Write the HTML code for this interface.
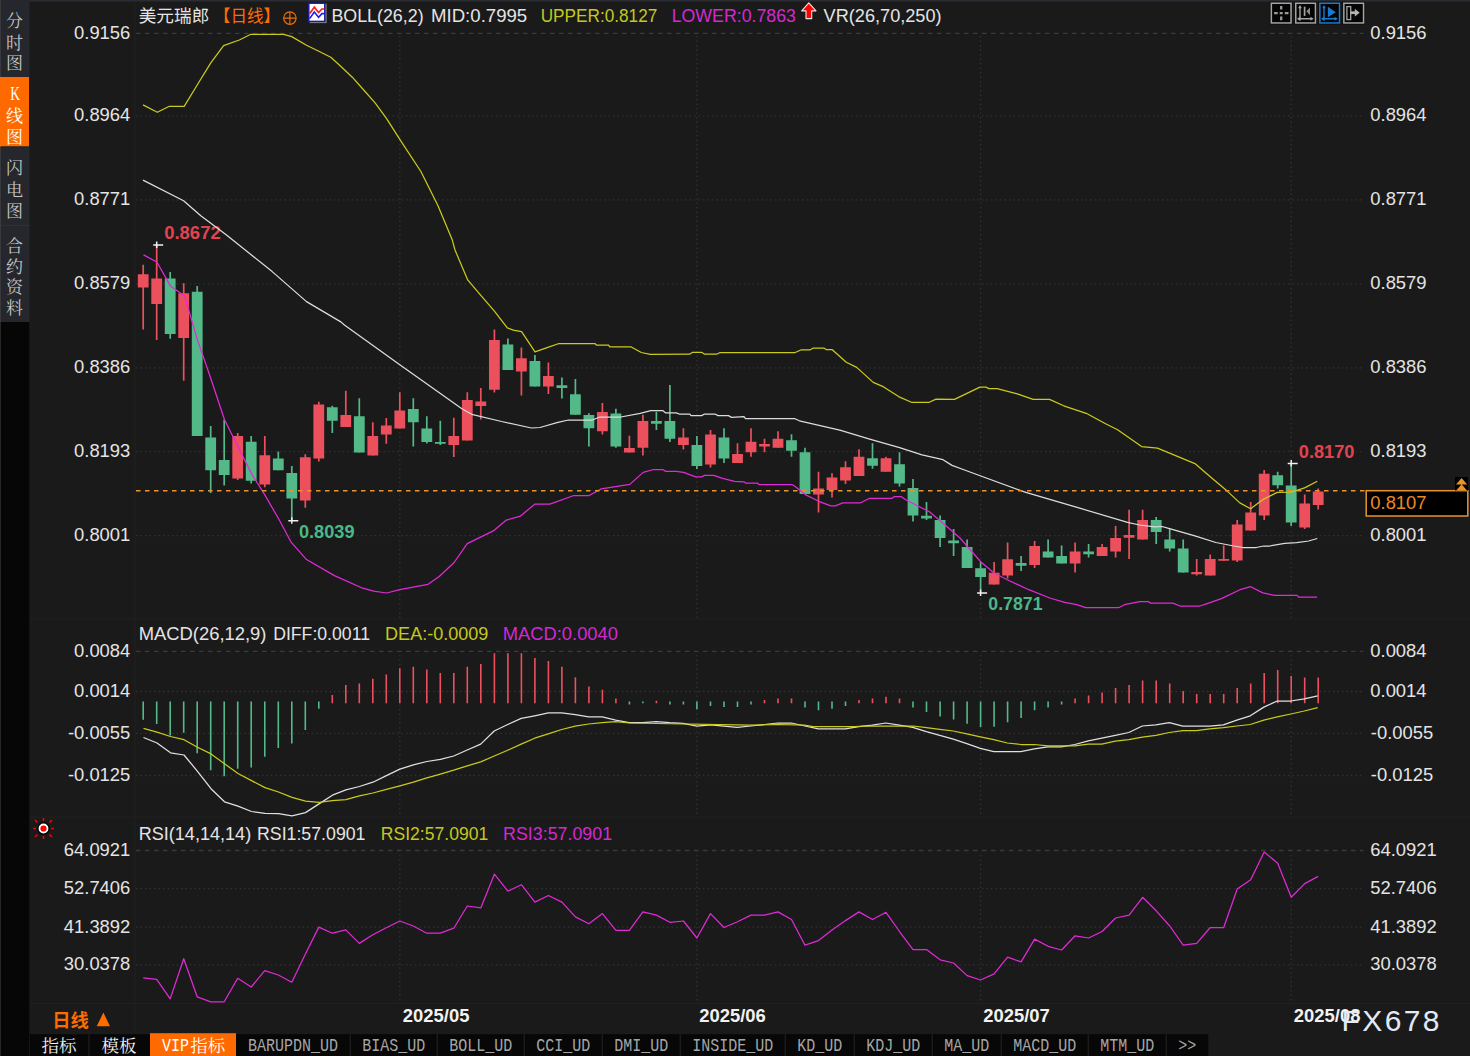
<!DOCTYPE html>
<html><head><meta charset="utf-8"><title>USDCHF</title>
<style>html,body{margin:0;padding:0;background:#1a1a1a;overflow:hidden}body{width:1470px;height:1056px;position:relative;font-family:"Liberation Sans",sans-serif}</style></head>
<body>
<svg width="1470" height="1056" viewBox="0 0 1470 1056" style="position:absolute;left:0;top:0;font-family:'Liberation Sans',sans-serif">
<rect width="1470" height="1056" fill="#1a1a1a"/>
<rect x="0" y="0" width="1470" height="1.5" fill="#2a2c31"/>
<rect x="29.5" y="618.3" width="1440.5" height="1.2" fill="#202020"/>
<rect x="29.5" y="816.3" width="1440.5" height="1.2" fill="#202020"/>
<rect x="29.5" y="1003" width="1440.5" height="1.2" fill="#202020"/>
<rect x="134.5" y="1.5" width="1" height="1031" fill="#212121"/>
<rect x="0" y="0" width="29.5" height="322" fill="#25272c"/>
<rect x="0" y="0" width="1" height="322" fill="#38393d"/>
<rect x="0" y="322" width="29.2" height="734" fill="#060606"/>
<rect x="0" y="322" width="1" height="734" fill="#282828"/>
<rect x="0" y="77" width="29" height="69.5" fill="#ff6a00"/>
<rect x="1" y="225" width="28.5" height="1" fill="#2e3036"/>
<rect x="1" y="146.5" width="28.5" height="1" fill="#1f2024"/>
<path d="M136 33.4H1363.3" stroke="#3b3b3b" stroke-width="1.3" stroke-dasharray="4.5 4.5" fill="none"/>
<path d="M136 115.9H1363.3M136 199.9H1363.3M136 283.8H1363.3M136 367.8H1363.3M136 451.7H1363.3M136 535.6H1363.3" stroke="#313131" stroke-width="1.3" stroke-dasharray="1.5 3" fill="none"/>
<path d="M399.8 36V619M399.8 655V814M399.8 855V1000.5M696.9 36V619M696.9 655V814M696.9 855V1000.5M980.6 36V619M980.6 655V814M980.6 855V1000.5M1291.2 36V619M1291.2 655V814M1291.2 855V1000.5" stroke="#313131" stroke-width="1.3" stroke-dasharray="1.5 3" fill="none"/>
<path d="M136 651.4H1363.3" stroke="#3b3b3b" stroke-width="1.3" stroke-dasharray="4.5 4.5" fill="none"/>
<path d="M136 691.5H1363.3M136 733.3H1363.3M136 775.5H1363.3" stroke="#313131" stroke-width="1.3" stroke-dasharray="1.5 3" fill="none"/>
<path d="M136 850.5H1363.3" stroke="#3b3b3b" stroke-width="1.3" stroke-dasharray="4.5 4.5" fill="none"/>
<path d="M136 888.6H1363.3M136 927.1H1363.3M136 964.8H1363.3" stroke="#313131" stroke-width="1.3" stroke-dasharray="1.5 3" fill="none"/>
<path d="M143.2 264.8V329.6M156.7 245.0V340.0M183.7 283.3V380.7M237.7 433.0V479.9M264.8 435.9V487.3M305.3 454.3V507.7M318.8 401.8V461.4M345.8 390.8V427.1M372.8 422.3V455.5M386.3 418.1V443.7M399.8 392.3V428.6M453.8 417.8V457.0M467.3 392.3V440.5M480.8 387.9V419.6M494.4 329.5V392.6M521.4 347.4V395.6M548.4 362.4V393.9M602.4 402.9V434.6M629.4 435.8V452.5M642.9 414.8V455.5M683.4 428.3V449.5M710.5 430.1V467.5M737.5 443.3V463.0M751.0 428.3V456.7M764.5 438.7V452.2M778.0 431.3V447.7M818.5 471.7V512.5M832.0 473.2V497.5M845.5 461.2V484.1M859.0 449.2V476.1M886.0 456.7V471.7M994.1 562.0V584.5M1007.6 542.6V578.5M1034.6 541.0V568.0M1075.1 542.6V572.5M1102.1 544.0V556.0M1115.6 526.0V557.5M1129.1 509.7V559.0M1142.6 509.7V539.6M1196.7 559.0V575.4M1210.2 554.5V575.4M1223.7 545.5V560.8M1237.2 520.0V562.0M1250.7 502.1V530.5M1264.2 470.0V520.0M1304.7 494.6V529.0M1318.2 488.6V509.6" stroke="#ec505d" stroke-width="1.7" fill="none"/>
<path d="M170.2 272.0V338.7M197.2 286.1V435.9M210.7 425.9V493.0M224.2 419.7V485.6M251.2 436.1V483.6M278.3 451.5V470.2M291.8 466.0V520.5M332.3 405.8V433.0M359.3 398.3V452.5M413.3 398.3V446.5M426.8 416.3V443.5M440.3 420.8V445.0M507.9 338.5V369.9M534.9 355.0V386.4M561.9 377.4V398.4M575.4 378.9V414.8M588.9 413.3V446.6M615.9 408.8V447.8M656.4 411.8V430.1M669.9 384.9V442.1M696.9 436.1V469.0M724.0 428.3V463.0M791.5 434.2V456.7M805.0 447.7V494.1M872.5 443.2V468.7M899.5 452.2V486.6M913.0 479.1V521.5M926.5 502.0V520.0M940.1 515.5V547.0M953.6 529.1V556.0M967.1 539.6V568.0M980.6 562.0V593.0M1021.1 556.0V571.0M1048.1 539.6V557.5M1061.6 545.6V563.5M1088.6 544.0V557.5M1156.2 517.0V544.0M1169.7 528.3V551.5M1183.2 539.5V572.4M1277.7 471.7V488.6M1291.2 464.0V526.0" stroke="#54b989" stroke-width="1.7" fill="none"/>
<path d="M137.8 274.2h10.8V287.6h-10.8zM151.3 278.5h10.8V304.0h-10.8zM178.3 293.3h10.8V338.1h-10.8zM232.3 436.1h10.8V478.5h-10.8zM259.4 455.2h10.8V484.4h-10.8zM299.9 457.2h10.8V500.6h-10.8zM313.4 404.6h10.8V458.6h-10.8zM340.4 415.1h10.8V427.1h-10.8zM367.4 436.0h10.8V455.5h-10.8zM380.9 425.6h10.8V434.5h-10.8zM394.4 410.6h10.8V428.6h-10.8zM448.4 436.0h10.8V445.0h-10.8zM461.9 400.1h10.8V440.5h-10.8zM475.4 401.6h10.8V406.1h-10.8zM489.0 340.0h10.8V389.7h-10.8zM516.0 358.2h10.8V371.4h-10.8zM543.0 375.9h10.8V386.4h-10.8zM597.0 412.1h10.8V431.3h-10.8zM624.0 448.1h10.8V452.5h-10.8zM637.5 421.1h10.8V447.8h-10.8zM678.0 437.6h10.8V445.1h-10.8zM705.1 434.6h10.8V464.5h-10.8zM732.1 454.0h10.8V463.0h-10.8zM745.6 441.7h10.8V452.2h-10.8zM759.1 444.0h10.8V446.4h-10.8zM772.6 438.7h10.8V447.7h-10.8zM813.1 488.6h10.8V494.6h-10.8zM826.6 477.6h10.8V490.1h-10.8zM840.1 467.2h10.8V480.6h-10.8zM853.6 456.7h10.8V476.1h-10.8zM880.6 458.2h10.8V471.7h-10.8zM988.7 572.8h10.8V584.5h-10.8zM1002.2 559.3h10.8V575.5h-10.8zM1029.2 545.9h10.8V565.0h-10.8zM1069.7 551.6h10.8V563.5h-10.8zM1096.7 547.0h10.8V556.0h-10.8zM1110.2 538.0h10.8V551.6h-10.8zM1123.7 535.0h10.8V537.8h-10.8zM1137.2 520.0h10.8V539.6h-10.8zM1191.3 572.0h10.8V574.2h-10.8zM1204.8 559.0h10.8V575.4h-10.8zM1218.3 559.0h10.8V560.8h-10.8zM1231.8 524.6h10.8V560.5h-10.8zM1245.3 512.6h10.8V530.5h-10.8zM1258.8 473.7h10.8V515.6h-10.8zM1299.3 503.6h10.8V527.5h-10.8zM1312.8 491.6h10.8V505.1h-10.8z" fill="#ec505d"/>
<path d="M164.8 278.5h10.8V333.9h-10.8zM191.8 291.8h10.8V435.9h-10.8zM205.3 437.6h10.8V470.2h-10.8zM218.8 460.0h10.8V475.0h-10.8zM245.8 441.8h10.8V480.7h-10.8zM272.9 458.6h10.8V470.2h-10.8zM286.4 473.0h10.8V498.6h-10.8zM326.9 407.3h10.8V420.8h-10.8zM353.9 416.3h10.8V452.5h-10.8zM407.9 409.1h10.8V422.3h-10.8zM421.4 428.6h10.8V442.0h-10.8zM434.9 442.0h10.8V443.7h-10.8zM502.5 344.5h10.8V369.9h-10.8zM529.5 361.0h10.8V386.4h-10.8zM556.5 385.2h10.8V387.9h-10.8zM570.0 394.2h10.8V414.8h-10.8zM583.5 415.1h10.8V428.3h-10.8zM610.5 413.6h10.8V446.6h-10.8zM651.0 421.1h10.8V423.8h-10.8zM664.5 421.1h10.8V438.8h-10.8zM691.5 445.1h10.8V466.0h-10.8zM718.6 437.6h10.8V458.5h-10.8zM786.1 440.2h10.8V450.7h-10.8zM799.6 452.2h10.8V494.1h-10.8zM867.1 458.2h10.8V465.7h-10.8zM894.1 464.2h10.8V483.6h-10.8zM907.6 488.1h10.8V515.5h-10.8zM921.1 515.8h10.8V518.5h-10.8zM934.7 520.0h10.8V538.0h-10.8zM948.2 540.6h10.8V543.3h-10.8zM961.7 547.0h10.8V568.0h-10.8zM975.2 568.3h10.8V577.0h-10.8zM1015.7 563.1h10.8V565.8h-10.8zM1042.7 551.6h10.8V557.5h-10.8zM1056.2 556.0h10.8V563.5h-10.8zM1083.2 551.6h10.8V554.3h-10.8zM1150.8 520.0h10.8V532.0h-10.8zM1164.3 539.5h10.8V548.5h-10.8zM1177.8 548.5h10.8V572.4h-10.8zM1272.3 475.2h10.8V485.2h-10.8zM1285.8 485.6h10.8V522.6h-10.8z" fill="#54b989"/>
<rect x="163.6" y="224.5" width="58" height="17.5" fill="#1a1a1a"/>
<rect x="298.2" y="522.8" width="58" height="17.5" fill="#1a1a1a"/>
<rect x="987.6" y="595" width="58" height="17.5" fill="#1a1a1a"/>
<rect x="1298.2" y="443.5" width="58" height="17.5" fill="#1a1a1a"/>
<text x="164.2" y="239.3" font-size="17.8" fill="#e2444f" text-anchor="start" font-weight="bold" textLength="56.5" lengthAdjust="spacingAndGlyphs">0.8672</text>
<text x="298.9" y="537.8" font-size="17.8" fill="#4ab888" text-anchor="start" font-weight="bold" textLength="55.6" lengthAdjust="spacingAndGlyphs">0.8039</text>
<text x="988.3" y="610.0" font-size="17.8" fill="#4ab888" text-anchor="start" font-weight="bold" textLength="54.2" lengthAdjust="spacingAndGlyphs">0.7871</text>
<text x="1298.8" y="458.3" font-size="17.8" fill="#e2444f" text-anchor="start" font-weight="bold" textLength="55.6" lengthAdjust="spacingAndGlyphs">0.8170</text>
<path d="M143.0 180.1L183.6 200.7L200.8 215.8L226.5 235.0L272.2 271.6L306.5 301.6L340.8 321.9L344.4 325.0L399.8 364.7L461.9 408.8L471.7 414.3L501.6 421.5L531.5 428.0L540.0 427.5L557.9 422.3L568.4 420.0L592.3 420.0L599.8 417.0L620.8 417.0L640.2 413.3L650.7 410.6L662.7 410.6L665.7 412.9L676.2 412.9L679.2 414.0L689.6 414.0L691.1 415.6L701.6 415.6L704.6 414.0L715.0 414.0L718.0 415.6L728.5 415.6L731.5 417.4L744.0 416.7L745.5 418.7L794.9 418.7L799.4 420.8L839.8 430.2L869.7 439.2L899.6 447.7L922.0 454.9L943.0 459.7L952.0 465.4L964.5 470.0L1025.8 492.4L1079.7 508.2L1127.6 522.4L1139.6 525.0L1154.5 526.9L1162.0 526.5L1169.5 528.6L1194.9 535.8L1215.8 542.5L1233.8 546.0L1242.8 547.5L1256.3 547.5L1263.7 546.0L1269.7 546.0L1284.7 543.3L1296.7 542.7L1308.6 541.0L1317.3 538.5" stroke="#dcdcdc" stroke-width="1.25" fill="none" stroke-linejoin="round"/>
<path d="M143.0 104.9L157.3 112.3L169.3 106.3L184.2 106.3L197.5 84.5L210.8 62.9L223.6 45.7L239.3 40.0L250.8 34.3L283.7 34.3L291.7 36.6L306.5 45.2L318.8 51.2L330.8 57.2L341.5 67.0L352.3 77.2L363.7 90.0L375.1 102.9L386.6 118.6L400.3 140.1L420.9 171.5L438.0 205.8L452.3 240.1L455.0 250.0L463.9 271.0L467.7 279.9L480.4 294.9L494.6 311.4L507.3 327.8L513.3 330.1L521.6 331.6L535.0 351.8L547.8 347.3L559.0 343.5L594.9 343.5L596.4 345.0L608.4 345.0L609.9 346.8L630.8 346.8L641.3 352.5L650.3 354.3L689.6 354.2L692.6 352.3L701.6 352.3L704.6 354.2L716.6 354.2L719.6 352.7L748.0 352.7L794.6 352.7L801.4 349.8L810.3 349.8L813.3 348.0L823.8 348.0L826.1 349.5L832.0 349.5L846.3 362.2L856.7 367.4L873.2 382.4L883.7 386.9L898.6 396.6L911.4 402.3L929.3 402.3L936.0 399.1L954.5 399.4L979.9 387.1L985.9 387.1L988.9 388.6L997.1 388.6L1017.3 393.9L1033.1 399.4L1049.5 399.4L1063.7 405.8L1086.2 413.3L1105.6 423.8L1117.6 429.8L1141.6 446.6L1157.5 448.2L1194.9 463.6L1212.9 478.9L1227.8 491.6L1239.8 502.9L1250.6 508.8L1263.7 499.1L1277.2 492.4L1291.1 492.1L1304.6 487.9L1317.3 481.2" stroke="#caca1c" stroke-width="1.25" fill="none" stroke-linejoin="round"/>
<path d="M143.5 254.9L156.9 262.0L170.5 286.1L184.7 296.1L197.5 340.1L210.3 377.0L224.5 419.7L233.0 436.7L251.5 473.6L264.8 494.9L280.0 521.2L290.9 541.8L306.1 559.2L334.4 575.6L362.7 588.2L373.6 591.2L386.7 593.0L399.7 589.7L428.0 584.3L438.9 576.7L454.1 562.5L467.2 543.6L493.3 530.9L506.4 520.1L520.5 516.1L534.7 504.2L549.9 504.2L573.9 495.5L589.1 495.5L601.3 488.9L629.8 484.4L643.2 472.4L653.7 469.5L662.7 469.5L665.7 471.4L676.2 471.4L683.6 472.4L695.6 476.9L701.6 476.9L704.6 475.4L713.6 475.4L722.6 478.4L734.5 481.4L744.0 481.8L745.5 483.0L757.4 483.0L759.0 484.5L791.9 484.5L794.9 486.3L805.3 494.6L818.8 501.3L830.8 505.8L835.3 505.8L842.8 502.8L860.7 502.8L869.7 498.3L892.1 498.3L894.4 496.5L901.1 496.5L905.6 499.8L929.5 511.8L944.5 524.5L960.0 538.0L980.9 562.0L994.4 573.3L1009.4 580.7L1028.8 589.7L1049.8 598.0L1064.7 602.4L1076.7 604.7L1085.7 607.7L1118.6 607.7L1124.6 604.7L1139.6 601.7L1148.5 601.7L1150.7 603.1L1172.9 603.1L1180.0 606.0L1200.0 606.0L1207.1 603.6L1221.4 598.6L1240.0 589.7L1250.7 586.7L1262.9 592.9L1274.3 595.4L1297.1 595.4L1298.6 597.1L1317.1 597.1" stroke="#e02ad6" stroke-width="1.25" fill="none" stroke-linejoin="round"/>
<path d="M136 490.7H1365.5" stroke="#e8932c" stroke-width="1.6" stroke-dasharray="4.5 4.5" fill="none"/>
<path d="M153.2 245H163.2M156.7 241.5V248" stroke="#f0f0f0" stroke-width="1.5" fill="none"/>
<path d="M288.3 520.8H298.3M291.8 517.3V523.8" stroke="#f0f0f0" stroke-width="1.5" fill="none"/>
<path d="M977.1 593H987.1M980.6 589.5V596" stroke="#f0f0f0" stroke-width="1.5" fill="none"/>
<path d="M1287.7 463.6H1297.7M1291.2 460.1V466.6" stroke="#f0f0f0" stroke-width="1.5" fill="none"/>
<path d="M332.3 703.2V695.1M345.8 703.2V684.9M359.3 703.2V683.6M372.8 703.2V678.8M386.3 703.2V674.4M399.8 703.2V668.3M413.3 703.2V666.8M426.8 703.2V669.6M440.3 703.2V672.9M453.8 703.2V672.9M467.3 703.2V666.8M480.8 703.2V664.0M494.4 703.2V653.3M507.9 703.2V653.3M521.4 703.2V653.3M534.9 703.2V658.1M548.4 703.2V660.9M561.9 703.2V666.8M575.4 703.2V677.2M588.9 703.2V686.4M602.4 703.2V689.7M615.9 703.2V698.4M656.4 703.2V700.8M764.5 703.2V700.1M778.0 703.2V698.4M791.5 703.2V698.4M859.0 703.2V700.1M872.5 703.2V698.4M886.0 703.2V696.8M899.5 703.2V698.4M1075.1 703.2V698.4M1088.6 703.2V695.5M1102.1 703.2V692.5M1115.6 703.2V687.9M1129.1 703.2V684.9M1142.6 703.2V680.5M1156.2 703.2V680.5M1169.7 703.2V683.6M1183.2 703.2V691.0M1196.7 703.2V694.0M1210.2 703.2V694.0M1223.7 703.2V694.0M1237.2 703.2V687.9M1250.7 703.2V683.6M1264.2 703.2V672.9M1277.7 703.2V670.1M1291.2 703.2V675.9M1304.7 703.2V677.5M1318.2 703.2V677.5" stroke="#ec505d" stroke-width="1.6" fill="none"/>
<path d="M143.2 701.6V719.7M156.7 701.6V724.0M170.2 701.6V735.4M183.7 701.6V732.8M197.2 701.6V753.2M210.7 701.6V770.2M224.2 701.6V776.3M237.7 701.6V768.7M251.2 701.6V767.6M264.8 701.6V756.7M278.3 701.6V748.0M291.8 701.6V743.6M305.3 701.6V729.9M318.8 701.6V708.8M629.4 701.6V704.5M642.9 701.6V703.2M669.9 701.6V704.5M683.4 701.6V704.5M696.9 701.6V709.2M710.5 701.6V705.9M724.0 701.6V707.0M737.5 701.6V707.0M751.0 701.6V704.5M805.0 701.6V707.5M818.5 701.6V710.3M832.0 701.6V708.8M845.5 701.6V706.0M913.0 701.6V707.5M926.5 701.6V711.9M940.1 701.6V716.4M953.6 701.6V719.5M967.1 701.6V723.8M980.6 701.6V727.1M994.1 701.6V726.7M1007.6 701.6V722.3M1021.1 701.6V718.0M1034.6 701.6V710.3M1048.1 701.6V707.5M1061.6 701.6V704.5" stroke="#54b989" stroke-width="1.6" fill="none"/>
<path d="M143.5 737.5L157.0 743.0L170.5 752.8L184.0 755.0L197.5 771.3L211.0 788.7L224.5 801.8L238.0 806.1L251.5 811.5L265.0 813.3L278.5 813.7L292.0 815.9L305.5 812.6L319.0 803.9L332.4 795.2L345.9 789.8L359.4 786.5L372.9 782.2L386.4 775.6L399.9 769.1L413.4 764.8L426.9 761.5L440.4 759.3L453.7 756.0L467.2 750.0L480.7 744.1L494.2 731.0L507.7 724.5L521.2 718.4L534.7 715.8L548.2 712.9L561.7 712.9L575.2 714.7L588.7 716.9L602.2 716.9L615.7 720.1L629.2 722.7L642.7 722.7L656.2 721.7L669.6 722.7L683.1 723.4L696.9 726.2L710.4 724.9L723.9 726.2L737.3 727.3L750.8 726.0L764.4 724.5L777.9 723.0L791.4 723.0L804.9 726.0L818.4 728.8L831.8 728.8L845.3 728.8L858.8 726.7L872.3 725.1L885.8 723.0L899.3 725.1L912.8 727.3L926.3 731.7L939.8 735.4L953.3 739.1L966.8 743.6L980.3 748.4L993.8 751.7L1007.3 751.7L1020.8 751.7L1034.3 748.9L1047.8 746.9L1061.3 746.9L1074.8 744.5L1088.3 740.8L1101.8 738.2L1115.3 735.4L1128.8 732.5L1142.3 726.0L1155.8 724.9L1169.3 722.7L1182.8 726.2L1196.3 726.2L1209.8 726.2L1223.3 724.9L1236.8 720.1L1250.3 715.8L1263.8 707.1L1277.3 701.0L1290.8 701.0L1304.3 698.8L1317.7 695.8" stroke="#e0e0e0" stroke-width="1.25" fill="none" stroke-linejoin="round"/>
<path d="M143.5 728.4L157.0 732.1L170.5 736.5L184.0 739.7L197.5 747.3L211.0 753.9L224.5 763.7L238.0 773.5L251.5 780.6L265.0 787.6L278.5 792.0L292.0 797.4L305.5 801.1L319.0 802.4L332.4 800.7L345.9 799.6L359.4 795.9L372.9 793.0L386.4 789.3L399.9 785.9L413.4 782.2L426.9 777.8L440.4 774.1L453.7 770.2L467.2 765.8L480.7 761.9L494.2 756.0L507.7 750.2L521.2 744.1L534.7 738.2L548.2 733.8L561.7 729.5L575.2 726.2L588.7 724.0L602.2 722.7L615.7 721.7L629.2 723.0L750.0 725.1L777.9 724.5L804.4 725.1L813.1 726.7L854.5 726.7L865.4 726.0L913.3 726.0L926.3 727.7L939.8 729.3L953.3 731.0L966.8 733.8L980.3 736.9L993.8 739.7L1007.3 743.0L1020.8 744.5L1034.3 744.5L1047.8 745.8L1074.8 745.8L1088.3 744.1L1101.8 744.1L1115.3 741.2L1128.8 739.7L1142.3 737.1L1155.8 735.4L1169.3 732.5L1182.8 730.6L1196.3 730.6L1209.8 728.8L1223.3 727.7L1236.8 726.0L1250.3 724.5L1263.8 720.1L1277.3 716.9L1290.8 714.0L1304.3 711.0L1317.7 707.7" stroke="#caca1c" stroke-width="1.25" fill="none" stroke-linejoin="round"/>
<path d="M143.2 977.8L156.7 979.3L170.2 998.9L183.7 958.7L197.2 996.8L210.7 1001.8L224.2 1001.8L237.7 978.3L251.2 987.0L264.8 970.6L278.3 975.0L291.8 982.2L305.3 954.3L318.8 927.1L332.3 933.2L345.8 929.9L359.3 943.4L372.8 934.7L386.3 927.8L399.8 921.0L413.3 926.0L426.8 933.2L440.3 933.2L453.8 928.2L467.3 906.0L480.8 907.9L494.4 874.2L507.9 891.2L521.4 884.7L534.9 902.1L548.4 895.5L561.9 902.1L575.4 916.9L588.9 923.8L602.4 913.6L615.9 930.4L629.4 930.4L642.9 911.9L656.4 915.1L669.9 922.3L683.4 921.0L696.9 938.0L710.5 913.6L724.0 927.5L737.5 921.7L751.0 915.1L764.5 915.1L778.0 911.9L791.5 919.5L805.0 945.2L818.5 940.6L832.0 929.9L845.5 920.6L859.0 911.9L872.5 919.5L886.0 912.3L899.5 931.5L913.0 949.5L926.5 949.5L940.1 959.8L953.6 963.0L967.1 975.6L980.6 980.0L994.1 973.9L1007.6 957.1L1021.1 961.9L1034.6 939.1L1048.1 946.3L1061.6 950.0L1075.1 935.8L1088.6 938.0L1102.1 931.5L1115.6 918.0L1129.1 915.1L1142.6 897.3L1156.2 910.8L1169.7 926.0L1183.2 945.2L1196.7 943.4L1210.2 927.5L1223.7 927.5L1237.2 889.0L1250.7 879.7L1264.2 852.0L1277.7 863.3L1291.2 897.3L1304.7 883.6L1318.2 876.4" stroke="#e02ad6" stroke-width="1.25" fill="none" stroke-linejoin="round"/>
<text x="130.3" y="38.6" font-size="18.4" fill="#e4e4e4" text-anchor="end" font-weight="normal" >0.9156</text>
<text x="1370.3" y="38.6" font-size="18.4" fill="#e4e4e4" text-anchor="start" font-weight="normal" >0.9156</text>
<text x="130.3" y="121.1" font-size="18.4" fill="#e4e4e4" text-anchor="end" font-weight="normal" >0.8964</text>
<text x="1370.3" y="121.1" font-size="18.4" fill="#e4e4e4" text-anchor="start" font-weight="normal" >0.8964</text>
<text x="130.3" y="205.1" font-size="18.4" fill="#e4e4e4" text-anchor="end" font-weight="normal" >0.8771</text>
<text x="1370.3" y="205.1" font-size="18.4" fill="#e4e4e4" text-anchor="start" font-weight="normal" >0.8771</text>
<text x="130.3" y="289.0" font-size="18.4" fill="#e4e4e4" text-anchor="end" font-weight="normal" >0.8579</text>
<text x="1370.3" y="289.0" font-size="18.4" fill="#e4e4e4" text-anchor="start" font-weight="normal" >0.8579</text>
<text x="130.3" y="372.9" font-size="18.4" fill="#e4e4e4" text-anchor="end" font-weight="normal" >0.8386</text>
<text x="1370.3" y="372.9" font-size="18.4" fill="#e4e4e4" text-anchor="start" font-weight="normal" >0.8386</text>
<text x="130.3" y="456.9" font-size="18.4" fill="#e4e4e4" text-anchor="end" font-weight="normal" >0.8193</text>
<text x="1370.3" y="456.9" font-size="18.4" fill="#e4e4e4" text-anchor="start" font-weight="normal" >0.8193</text>
<text x="130.3" y="540.9" font-size="18.4" fill="#e4e4e4" text-anchor="end" font-weight="normal" >0.8001</text>
<text x="1370.3" y="540.9" font-size="18.4" fill="#e4e4e4" text-anchor="start" font-weight="normal" >0.8001</text>
<text x="130.3" y="656.9" font-size="18.4" fill="#e4e4e4" text-anchor="end" font-weight="normal" >0.0084</text>
<text x="1370.3" y="656.9" font-size="18.4" fill="#e4e4e4" text-anchor="start" font-weight="normal" >0.0084</text>
<text x="130.3" y="697.0" font-size="18.4" fill="#e4e4e4" text-anchor="end" font-weight="normal" >0.0014</text>
<text x="1370.3" y="697.0" font-size="18.4" fill="#e4e4e4" text-anchor="start" font-weight="normal" >0.0014</text>
<text x="130.3" y="738.8" font-size="18.4" fill="#e4e4e4" text-anchor="end" font-weight="normal" >-0.0055</text>
<text x="1370.8" y="738.8" font-size="18.4" fill="#e4e4e4" text-anchor="start" font-weight="normal" >-0.0055</text>
<text x="130.3" y="781.0" font-size="18.4" fill="#e4e4e4" text-anchor="end" font-weight="normal" >-0.0125</text>
<text x="1370.8" y="781.0" font-size="18.4" fill="#e4e4e4" text-anchor="start" font-weight="normal" >-0.0125</text>
<text x="130.3" y="856.0" font-size="18.4" fill="#e4e4e4" text-anchor="end" font-weight="normal" >64.0921</text>
<text x="1370.3" y="856.0" font-size="18.4" fill="#e4e4e4" text-anchor="start" font-weight="normal" >64.0921</text>
<text x="130.3" y="894.1" font-size="18.4" fill="#e4e4e4" text-anchor="end" font-weight="normal" >52.7406</text>
<text x="1370.3" y="894.1" font-size="18.4" fill="#e4e4e4" text-anchor="start" font-weight="normal" >52.7406</text>
<text x="130.3" y="932.6" font-size="18.4" fill="#e4e4e4" text-anchor="end" font-weight="normal" >41.3892</text>
<text x="1370.3" y="932.6" font-size="18.4" fill="#e4e4e4" text-anchor="start" font-weight="normal" >41.3892</text>
<text x="130.3" y="970.3" font-size="18.4" fill="#e4e4e4" text-anchor="end" font-weight="normal" >30.0378</text>
<text x="1370.3" y="970.3" font-size="18.4" fill="#e4e4e4" text-anchor="start" font-weight="normal" >30.0378</text>
<rect x="1366.2" y="490.7" width="101.6" height="25.3" fill="#000" stroke="#e8932c" stroke-width="1.5"/>
<text x="1370.3" y="508.9" font-size="18.4" fill="#ec8a22" text-anchor="start" font-weight="normal" >0.8107</text>
<rect x="1455" y="477" width="13" height="13.5" fill="#000"/>
<path d="M1456 484.5L1461.6 478L1467.2 484.5zM1456 490.7L1461.6 484.2L1467.2 490.7z" fill="#e8932c"/>
<text x="402.8" y="1022.4" font-size="18.4" fill="#f2f2f2" text-anchor="start" font-weight="bold" textLength="66.6" lengthAdjust="spacingAndGlyphs">2025/05</text>
<text x="699.2" y="1022.4" font-size="18.4" fill="#f2f2f2" text-anchor="start" font-weight="bold" textLength="66.6" lengthAdjust="spacingAndGlyphs">2025/06</text>
<text x="983.2" y="1022.4" font-size="18.4" fill="#f2f2f2" text-anchor="start" font-weight="bold" textLength="66.6" lengthAdjust="spacingAndGlyphs">2025/07</text>
<text x="1293.8" y="1022.4" font-size="18.4" fill="#f2f2f2" text-anchor="start" font-weight="bold" textLength="66.6" lengthAdjust="spacingAndGlyphs">2025/08</text>
<text x="331.4" y="21.7" font-size="18.8" fill="#e4e4e4" text-anchor="start" font-weight="normal" textLength="92.2" lengthAdjust="spacingAndGlyphs">BOLL(26,2)</text>
<text x="431" y="21.7" font-size="18.8" fill="#e4e4e4" text-anchor="start" font-weight="normal" textLength="96.2" lengthAdjust="spacingAndGlyphs">MID:0.7995</text>
<text x="540.7" y="21.7" font-size="18.8" fill="#c4c81e" text-anchor="start" font-weight="normal" textLength="116.6" lengthAdjust="spacingAndGlyphs">UPPER:0.8127</text>
<text x="671.7" y="21.7" font-size="18.8" fill="#d428d4" text-anchor="start" font-weight="normal" textLength="124.3" lengthAdjust="spacingAndGlyphs">LOWER:0.7863</text>
<text x="823.6" y="21.7" font-size="18.8" fill="#e4e4e4" text-anchor="start" font-weight="normal" textLength="118" lengthAdjust="spacingAndGlyphs">VR(26,70,250)</text>
<text x="138.7" y="640.0" font-size="18.8" fill="#e4e4e4" text-anchor="start" font-weight="normal" textLength="127.8" lengthAdjust="spacingAndGlyphs">MACD(26,12,9)</text>
<text x="273.2" y="640.0" font-size="18.8" fill="#e4e4e4" text-anchor="start" font-weight="normal" textLength="96.8" lengthAdjust="spacingAndGlyphs">DIFF:0.0011</text>
<text x="385.1" y="640.0" font-size="18.8" fill="#c4c81e" text-anchor="start" font-weight="normal" textLength="103.2" lengthAdjust="spacingAndGlyphs">DEA:-0.0009</text>
<text x="502.7" y="640.0" font-size="18.8" fill="#d428d4" text-anchor="start" font-weight="normal" textLength="115.3" lengthAdjust="spacingAndGlyphs">MACD:0.0040</text>
<text x="138.7" y="839.6" font-size="18.8" fill="#e4e4e4" text-anchor="start" font-weight="normal" textLength="112.5" lengthAdjust="spacingAndGlyphs">RSI(14,14,14)</text>
<text x="257" y="839.6" font-size="18.8" fill="#e4e4e4" text-anchor="start" font-weight="normal" textLength="108.5" lengthAdjust="spacingAndGlyphs">RSI1:57.0901</text>
<text x="380.8" y="839.6" font-size="18.8" fill="#c4c81e" text-anchor="start" font-weight="normal" textLength="107.5" lengthAdjust="spacingAndGlyphs">RSI2:57.0901</text>
<text x="503.1" y="839.6" font-size="18.8" fill="#d428d4" text-anchor="start" font-weight="normal" textLength="109" lengthAdjust="spacingAndGlyphs">RSI3:57.0901</text>
<text x="138.7" y="22.2" font-family="'Liberation Sans','Noto Sans CJK SC',sans-serif" font-size="17.6" fill="#e4e4e4" textLength="70.6" lengthAdjust="spacingAndGlyphs">美元瑞郎</text>
<text x="213.8" y="22" font-family="'Liberation Sans','Noto Sans CJK SC',sans-serif" font-size="16.6" fill="#ff6c00">【日线】</text>
<text font-family="'Liberation Serif','Noto Serif CJK SC',serif" font-size="17" fill="#c6c6c6" text-anchor="middle"><tspan x="14.6" y="27.3">分</tspan><tspan x="14.6" y="48.7">时</tspan><tspan x="14.6" y="69.2">图</tspan></text>
<text font-family="'Liberation Serif','Noto Serif CJK SC',serif" font-size="17" fill="#ffffff" text-anchor="middle"><tspan x="14.6" y="122.3">线</tspan><tspan x="14.6" y="143.1">图</tspan></text>
<text font-family="'Liberation Serif','Noto Serif CJK SC',serif" font-size="17" fill="#c6c6c6" text-anchor="middle"><tspan x="14.6" y="174.3">闪</tspan><tspan x="14.6" y="195.8">电</tspan><tspan x="14.6" y="216.6">图</tspan></text>
<text font-family="'Liberation Serif','Noto Serif CJK SC',serif" font-size="17" fill="#c6c6c6" text-anchor="middle"><tspan x="14.6" y="251.7">合</tspan><tspan x="14.6" y="272.8">约</tspan><tspan x="14.6" y="293.2">资</tspan><tspan x="14.6" y="314.2">料</tspan></text>
<text x="10.2" y="100" font-family="'Liberation Serif',serif" font-size="18.5" fill="#fff" textLength="9.8" lengthAdjust="spacingAndGlyphs">K</text>
<text x="52.3" y="1027" font-family="'Liberation Sans','Noto Sans CJK SC',sans-serif" font-size="18.3" font-weight="bold" fill="#ff6c00">日线</text>
<path d="M96.7 1026.2L103.4 1012.6L110 1026.2z" fill="#ff6c00"/>
<rect x="30" y="1034.2" width="1178.3" height="21.799999999999955" fill="#070707"/>
<rect x="150" y="1033.2" width="86" height="22.8" fill="#ff6a00"/>
<path d="M89 1033.7V1056M350.3 1033.7V1056M437.3 1033.7V1056M524.3 1033.7V1056M602.3 1033.7V1056M680.3 1033.7V1056M785.3 1033.7V1056M854.3 1033.7V1056M932.3 1033.7V1056M1001.3 1033.7V1056M1088.3 1033.7V1056M1166.3 1033.7V1056" stroke="#1b1b1b" stroke-width="1.5" fill="none"/>
<text x="41.5" y="1051.5" font-family="'Liberation Serif','Noto Serif CJK SC',serif" font-size="17.5" fill="#f2f2f2">指标</text>
<text x="101.5" y="1051.5" font-family="'Liberation Serif','Noto Serif CJK SC',serif" font-size="17.5" fill="#f2f2f2">模板</text>
<text x="190.2" y="1051.5" font-family="'Liberation Serif','Noto Serif CJK SC',serif" font-size="17.5" fill="#fff">指标</text>
<text transform="translate(162,1051) scale(1,1.17)" font-family="'Liberation Mono',monospace" font-size="15" fill="#fff" textLength="27" lengthAdjust="spacing">VIP</text>
<text transform="translate(248,1051) scale(1,1.17)" font-family="'Liberation Mono',monospace" font-size="15" fill="#a6a6a6" textLength="90" lengthAdjust="spacing">BARUPDN_UD</text>
<text transform="translate(362.3,1051) scale(1,1.17)" font-family="'Liberation Mono',monospace" font-size="15" fill="#a6a6a6" textLength="63" lengthAdjust="spacing">BIAS_UD</text>
<text transform="translate(449.3,1051) scale(1,1.17)" font-family="'Liberation Mono',monospace" font-size="15" fill="#a6a6a6" textLength="63" lengthAdjust="spacing">BOLL_UD</text>
<text transform="translate(536.3,1051) scale(1,1.17)" font-family="'Liberation Mono',monospace" font-size="15" fill="#a6a6a6" textLength="54" lengthAdjust="spacing">CCI_UD</text>
<text transform="translate(614.3,1051) scale(1,1.17)" font-family="'Liberation Mono',monospace" font-size="15" fill="#a6a6a6" textLength="54" lengthAdjust="spacing">DMI_UD</text>
<text transform="translate(692.3,1051) scale(1,1.17)" font-family="'Liberation Mono',monospace" font-size="15" fill="#a6a6a6" textLength="81" lengthAdjust="spacing">INSIDE_UD</text>
<text transform="translate(797.3,1051) scale(1,1.17)" font-family="'Liberation Mono',monospace" font-size="15" fill="#a6a6a6" textLength="45" lengthAdjust="spacing">KD_UD</text>
<text transform="translate(866.3,1051) scale(1,1.17)" font-family="'Liberation Mono',monospace" font-size="15" fill="#a6a6a6" textLength="54" lengthAdjust="spacing">KDJ_UD</text>
<text transform="translate(944.3,1051) scale(1,1.17)" font-family="'Liberation Mono',monospace" font-size="15" fill="#a6a6a6" textLength="45" lengthAdjust="spacing">MA_UD</text>
<text transform="translate(1013.3,1051) scale(1,1.17)" font-family="'Liberation Mono',monospace" font-size="15" fill="#a6a6a6" textLength="63" lengthAdjust="spacing">MACD_UD</text>
<text transform="translate(1100.3,1051) scale(1,1.17)" font-family="'Liberation Mono',monospace" font-size="15" fill="#a6a6a6" textLength="54" lengthAdjust="spacing">MTM_UD</text>
<text transform="translate(1178.3,1051) scale(1,1.17)" font-family="'Liberation Mono',monospace" font-size="15" fill="#a6a6a6" textLength="18" lengthAdjust="spacing">&gt;&gt;</text>
<g stroke="#f07000" stroke-width="1.15" fill="none"><circle cx="289.9" cy="18.1" r="6.2"/><path d="M283.7 18.1H296.1M289.9 11.9V24.3"/></g>
<rect x="309.6" y="3.6" width="17" height="19.5" fill="#8a8a8a"/>
<rect x="308.8" y="3.2" width="16" height="18.2" fill="#fff" stroke="#1a1aa0" stroke-width="1.5"/>
<path d="M309.6 13.8L314.3 7.2L318.6 12.6L321.9 9H324.4" stroke="#ff1a1a" stroke-width="1.6" fill="none"/>
<path d="M309.6 18.6L314.3 12L318.6 17.2L321.9 13.6H324.4" stroke="#1a1aff" stroke-width="1.6" fill="none"/>
<path d="M808.8 2.8L816 10.9H811.7V18.6H806V10.9H801.7z" fill="#ff0000" stroke="#e8e8e8" stroke-width="1.1" stroke-linejoin="round"/>
<rect x="1269.8" y="1.7" width="22.8" height="22.8" fill="#0d0d0d"/>
<rect x="1271.35" y="3.25" width="19.7" height="19.7" fill="#050505" stroke="#a4a4a4" stroke-width="1.5"/>
<rect x="1294.2" y="1.7" width="22.8" height="22.8" fill="#0d0d0d"/>
<rect x="1295.75" y="3.25" width="19.7" height="19.7" fill="#050505" stroke="#a4a4a4" stroke-width="1.5"/>
<rect x="1318.3" y="1.7" width="22.8" height="22.8" fill="#0d0d0d"/>
<rect x="1319.85" y="3.25" width="19.7" height="19.7" fill="#050505" stroke="#1c7acc" stroke-width="1.5"/>
<rect x="1342.3" y="1.7" width="22.8" height="22.8" fill="#0d0d0d"/>
<rect x="1343.85" y="3.25" width="19.7" height="19.7" fill="#050505" stroke="#a4a4a4" stroke-width="1.5"/>
<path d="M1274.1 13.1h3.6M1279.7 13.1h3M1284.8 13.1h3.7M1281.2 6v3.6M1281.2 16.6v3.6" stroke="#9a9a9a" stroke-width="2.3" fill="none"/>
<path d="M1300 6.5V20.5M1298 18.75H1312.5" stroke="#a4a4a4" stroke-width="1.4" fill="none"/><path d="M1300 5l1.9 3.2h-3.8zM1313.6 18.75l-3.2 1.9v-3.8zM1296.9 18.75l3.2 -1.9v3.8z" fill="#a4a4a4"/><path d="M1304.6 6.7V15.9" stroke="#a4a4a4" stroke-width="1.7"/><path d="M1306.4 11.3L1310 7.4V15.2z" fill="#8c8c8c"/>
<path d="M1324 6.5V20.5M1322 18.75H1336.6" stroke="#1c7acc" stroke-width="1.4" fill="none"/><path d="M1324 5l1.9 3.2h-3.8zM1337.7 18.75l-3.2 1.9v-3.8zM1321 18.75l3.2 -1.9v3.8z" fill="#1c7acc"/><path d="M1327.9 6.7L1335.8 12.2L1327.9 17.3z" fill="#1c7acc"/>
<rect x="1346.9" y="6.6" width="3.8" height="13" fill="none" stroke="#a4a4a4" stroke-width="1.3"/><path d="M1350.5 12.7H1355.5" stroke="#b4b4b4" stroke-width="2.7"/><path d="M1354.8 8.8L1359.7 12.7L1354.8 16.6z" fill="#b4b4b4"/>
<g><circle cx="43.5" cy="828.5" r="6.3" fill="#050505"/><circle cx="43.5" cy="828.5" r="4" fill="#ff0000" stroke="#fff" stroke-width="1.8"/><path d="M51.1 828.5L53.9 828.5M49.6 834.6L52.0 837.0M43.5 836.1L43.5 838.9M37.4 834.6L35.0 837.0M35.9 828.5L33.1 828.5M37.4 822.4L35.0 820.0M43.5 820.9L43.5 818.1M49.6 822.4L52.0 820.0" stroke="#ff0000" stroke-width="1.5" fill="none"/></g>
<text x="1341.5" y="1030.6" font-size="30" fill="#e2eaf7" textLength="98" lengthAdjust="spacing">FX678</text>
</svg>
</body></html>
